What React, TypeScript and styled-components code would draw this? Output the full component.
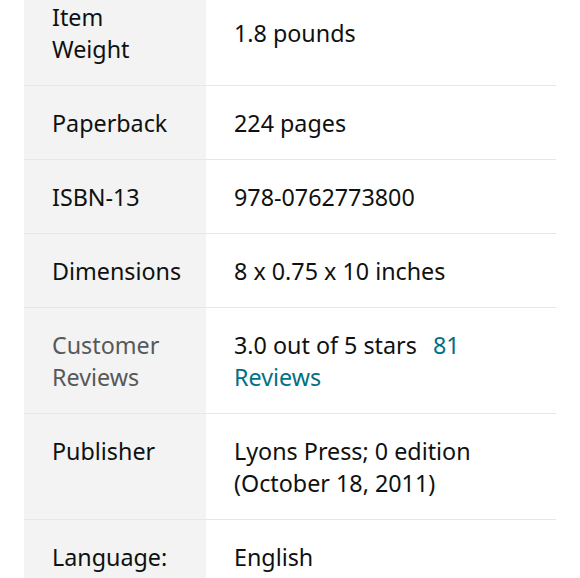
import React from "react";
import styled, { createGlobalStyle } from "styled-components";

const Global = createGlobalStyle`
  html, body { margin: 0; padding: 0; background: #ffffff; }
  body { font-family: "Noto Sans", "Open Sans", Arial, sans-serif; }
`;

const Page = styled.div`
  padding: 0 24px;
  margin-top: -20px;
`;

const Table = styled.table`
  width: 532px;
  border-collapse: collapse;
  table-layout: fixed;
`;

const Row = styled.tr`
  border-bottom: 1px solid #e7e7e7;
  &:last-child { border-bottom: none; }
`;

const Label = styled.th<{ $muted?: boolean }>`
  width: 182px;
  box-sizing: border-box;
  background: #f3f3f3;
  padding: 21px 20px 20px 28px;
  text-align: left;
  vertical-align: top;
  font-weight: 400;
  font-size: 23.3px;
  line-height: 32px;
  color: ${(p) => (p.$muted ? "#565959" : "#0f1111")};
`;

const Value = styled.td`
  padding: 21px 28px 20px 28px;
  vertical-align: middle;
  font-size: 23.3px;
  line-height: 32px;
  color: #0f1111;
`;

const Link = styled.a`
  color: #007185;
  text-decoration: none;
  margin-left: 16px;
`;

const rows: { key: string; label: React.ReactNode; value: React.ReactNode; muted?: boolean }[] = [
  { key: "weight", label: <>Item<br />Weight</>, value: "1.8 pounds" },
  { key: "pages", label: "Paperback", value: "224 pages" },
  { key: "isbn", label: "ISBN-13", value: "978-0762773800" },
  { key: "dim", label: "Dimensions", value: "8 x 0.75 x 10 inches" },
  {
    key: "reviews",
    label: "Customer Reviews",
    muted: true,
    value: (
      <>
        3.0 out of 5 stars<Link href="#">81 Reviews</Link>
      </>
    ),
  },
  { key: "pub", label: "Publisher", value: "Lyons Press; 0 edition (October 18, 2011)" },
  { key: "lang", label: "Language:", value: "English" },
];

export default function App() {
  return (
    <>
      <Global />
      <Page>
        <Table>
          <tbody>
            {rows.map((r) => (
              <Row key={r.key}>
                <Label $muted={r.muted}>{r.label}</Label>
                <Value>{r.value}</Value>
              </Row>
            ))}
          </tbody>
        </Table>
      </Page>
    </>
  );
}
